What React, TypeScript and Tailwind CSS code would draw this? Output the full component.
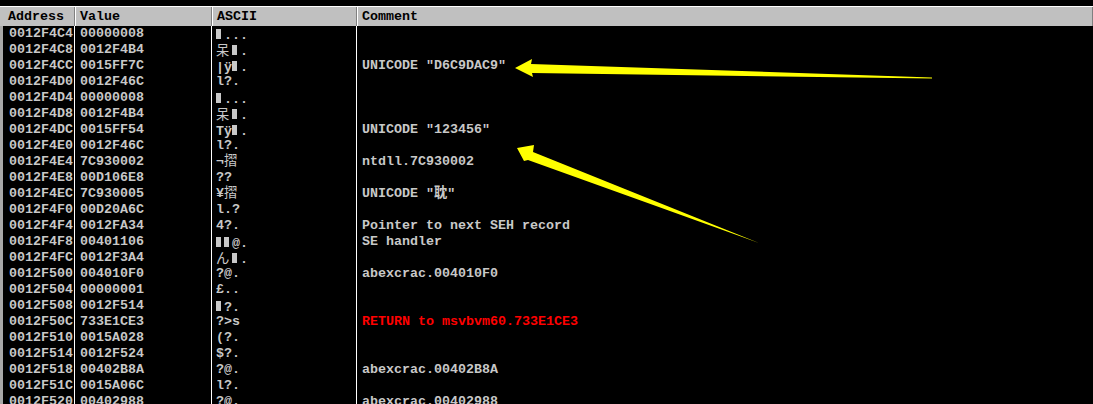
import React from "react";

type Row = { addr: string; value: string; ascii: string; comment?: string; red?: boolean };

// "#" stands for the filled block OllyDbg draws for control bytes
const rows: Row[] = [
  { addr: "0012F4C4", value: "00000008", ascii: "#..." },
  { addr: "0012F4C8", value: "0012F4B4", ascii: "呆#." },
  { addr: "0012F4CC", value: "0015FF7C", ascii: "|ÿ#.", comment: 'UNICODE "D6C9DAC9"' },
  { addr: "0012F4D0", value: "0012F46C", ascii: "l?." },
  { addr: "0012F4D4", value: "00000008", ascii: "#..." },
  { addr: "0012F4D8", value: "0012F4B4", ascii: "呆#." },
  { addr: "0012F4DC", value: "0015FF54", ascii: "Tÿ#.", comment: 'UNICODE "123456"' },
  { addr: "0012F4E0", value: "0012F46C", ascii: "l?." },
  { addr: "0012F4E4", value: "7C930002", ascii: "¬摺", comment: "ntdll.7C930002" },
  { addr: "0012F4E8", value: "00D106E8", ascii: "??" },
  { addr: "0012F4EC", value: "7C930005", ascii: "¥摺", comment: 'UNICODE "耽"' },
  { addr: "0012F4F0", value: "00D20A6C", ascii: "l.?" },
  { addr: "0012F4F4", value: "0012FA34", ascii: "4?.", comment: "Pointer to next SEH record" },
  { addr: "0012F4F8", value: "00401106", ascii: "##@.", comment: "SE handler" },
  { addr: "0012F4FC", value: "0012F3A4", ascii: "ん#." },
  { addr: "0012F500", value: "004010F0", ascii: "?@.", comment: "abexcrac.004010F0" },
  { addr: "0012F504", value: "00000001", ascii: "£.." },
  { addr: "0012F508", value: "0012F514", ascii: "#?." },
  { addr: "0012F50C", value: "733E1CE3", ascii: "?>s", comment: "RETURN to msvbvm60.733E1CE3", red: true },
  { addr: "0012F510", value: "0015A028", ascii: "(?." },
  { addr: "0012F514", value: "0012F524", ascii: "$?." },
  { addr: "0012F518", value: "00402B8A", ascii: "?@.", comment: "abexcrac.00402B8A" },
  { addr: "0012F51C", value: "0015A06C", ascii: "l?." },
  { addr: "0012F520", value: "00402988", ascii: "?@.", comment: "abexcrac.00402988" },
];

function Ascii({ text }: { text: string }) {
  return (
    <>
      {Array.from(text).map((ch, i) =>
        ch === "#" ? (
          <span key={i} className="inline-flex w-[8px] h-[16px] items-center">
            <span className="block w-[5px] h-[10px] bg-[#c8c8c8]" />
          </span>
        ) : ch.charCodeAt(0) > 0x2000 ? (
          <span key={i} className="inline-block w-[16px] font-normal">
            {ch}
          </span>
        ) : (
          <span key={i}>{ch}</span>
        )
      )}
    </>
  );
}

const headCell = "h-full flex items-center border-l border-l-white border-r border-r-[#808080]";

export default function App() {
  return (
    <div
      className="relative w-[1093px] h-[404px] bg-black overflow-hidden text-[13.33px] leading-[16px] font-bold"
      style={{ fontFamily: '"Liberation Mono", "Noto Sans CJK SC", monospace' }}
    >
      <div className="h-[6px]" />
      <div className="h-[1px] bg-white" />

      {/* Column header */}
      <div className="h-[19px] bg-[#c0c0c0] text-black grid grid-cols-[75px_137px_145px_1fr]">
        <div className={headCell + " pl-[8px] border-l-0"}>Address</div>
        <div className={headCell + " pl-[4px]"}>Value</div>
        <div className={headCell + " pl-[4px]"}>ASCII</div>
        <div className={headCell + " pl-[4px]"}>Comment</div>
      </div>

      {/* Stack dump */}
      <div className="text-[#c8c8c8]">
        {rows.map((r) => (
          <div key={r.addr} className="h-[16px] grid grid-cols-[75px_137px_145px_1fr] whitespace-nowrap">
            <div className="border-l-[3px] border-l-[#a8a8a8] border-r border-r-white pl-[6px]">{r.addr}</div>
            <div className="border-r border-r-white pl-[5px]">{r.value}</div>
            <div className="border-r border-r-white pl-[4px]">
              <Ascii text={r.ascii} />
            </div>
            <div className={"pl-[5px] " + (r.red ? "text-[#ff0000]" : "")}>{r.comment}</div>
          </div>
        ))}
      </div>

      {/* Annotation arrows drawn over the dump */}
      <svg className="absolute left-0 top-0 pointer-events-none" width="1093" height="404">
        <polygon
          points="515,68 532,59 531,64 932,77.5 932,78.5 532,73 533,77"
          fill="#ffff00"
        />
        <polygon
          points="517,148 534,145 533,152 759,243 528,160 524,161"
          fill="#ffff00"
        />
      </svg>
    </div>
  );
}
